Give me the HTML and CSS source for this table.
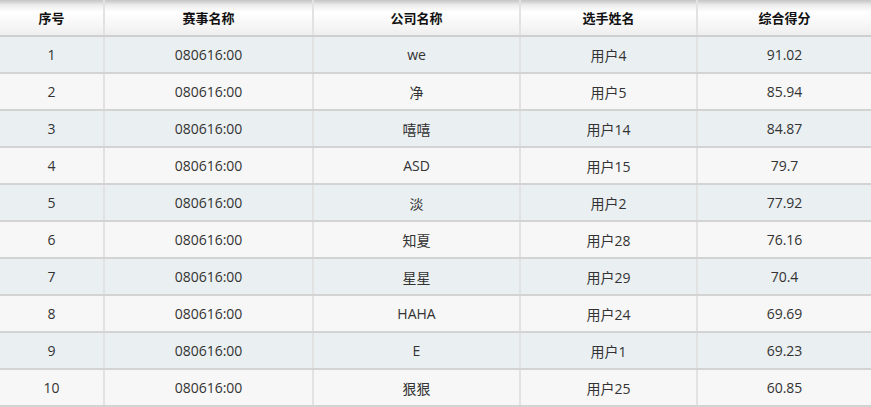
FILE: index.html
```html
<!DOCTYPE html>
<html>
<head>
<meta charset="utf-8">
<link rel="stylesheet" href="styles.css">
</head>
<body>
<table class="rank">
  <colgroup>
    <col class="c1"><col class="c2"><col class="c3"><col class="c4"><col class="c5">
  </colgroup>
  <thead>
    <tr><th>序号</th><th>赛事名称</th><th>公司名称</th><th>选手姓名</th><th>综合得分</th></tr>
  </thead>
  <tbody>
    <tr><td>1</td><td>080616:00</td><td>we</td><td>用户4</td><td>91.02</td></tr>
    <tr><td>2</td><td>080616:00</td><td>净</td><td>用户5</td><td>85.94</td></tr>
    <tr><td>3</td><td>080616:00</td><td>嘻嘻</td><td>用户14</td><td>84.87</td></tr>
    <tr><td>4</td><td>080616:00</td><td>ASD</td><td>用户15</td><td>79.7</td></tr>
    <tr><td>5</td><td>080616:00</td><td>淡</td><td>用户2</td><td>77.92</td></tr>
    <tr><td>6</td><td>080616:00</td><td>知夏</td><td>用户28</td><td>76.16</td></tr>
    <tr><td>7</td><td>080616:00</td><td>星星</td><td>用户29</td><td>70.4</td></tr>
    <tr><td>8</td><td>080616:00</td><td>HAHA</td><td>用户24</td><td>69.69</td></tr>
    <tr><td>9</td><td>080616:00</td><td>E</td><td>用户1</td><td>69.23</td></tr>
    <tr><td>10</td><td>080616:00</td><td>狠狠</td><td>用户25</td><td>60.85</td></tr>
  </tbody>
</table>
</body>
</html>
```
FILE: styles.css
```css
html, body {
  margin: 0;
  padding: 0;
  background: #ffffff;
}
body {
  font-family: "Open Sans", "Noto Sans CJK SC", sans-serif;
  font-size: 14px;
  color: #333333;
}
.rank {
  width: 871px;
  border-collapse: collapse;
  table-layout: fixed;
}
.c1 { width: 104px; }
.c2 { width: 209px; }
.c3 { width: 207px; }
.c4 { width: 177px; }
.c5 { width: 174px; }
.rank th {
  height: 35px;
  padding: 0;
  font-size: 13px;
  font-weight: bold;
  color: #111111;
  text-align: center;
  background: linear-gradient(to bottom, #c4c4c4 0px, #ececec 5px, #ffffff 12px, #f4f4f4 28px, #eeeeee 35px);
  border-left: 2px solid #e2e2e2;
  border-bottom: 2px solid #cfcfcf;
}
.rank td {
  height: 35px;
  padding: 0;
  text-align: center;
  border-left: 2px solid #e2e2e2;
  border-bottom: 2px solid #d3d3d3;
}
.rank th:first-child, .rank td:first-child {
  border-left: none;
}
.rank tbody tr:nth-child(odd) td {
  background: #eaeff2;
}
.rank tbody tr:nth-child(even) td {
  background: #f7f7f7;
}
```
